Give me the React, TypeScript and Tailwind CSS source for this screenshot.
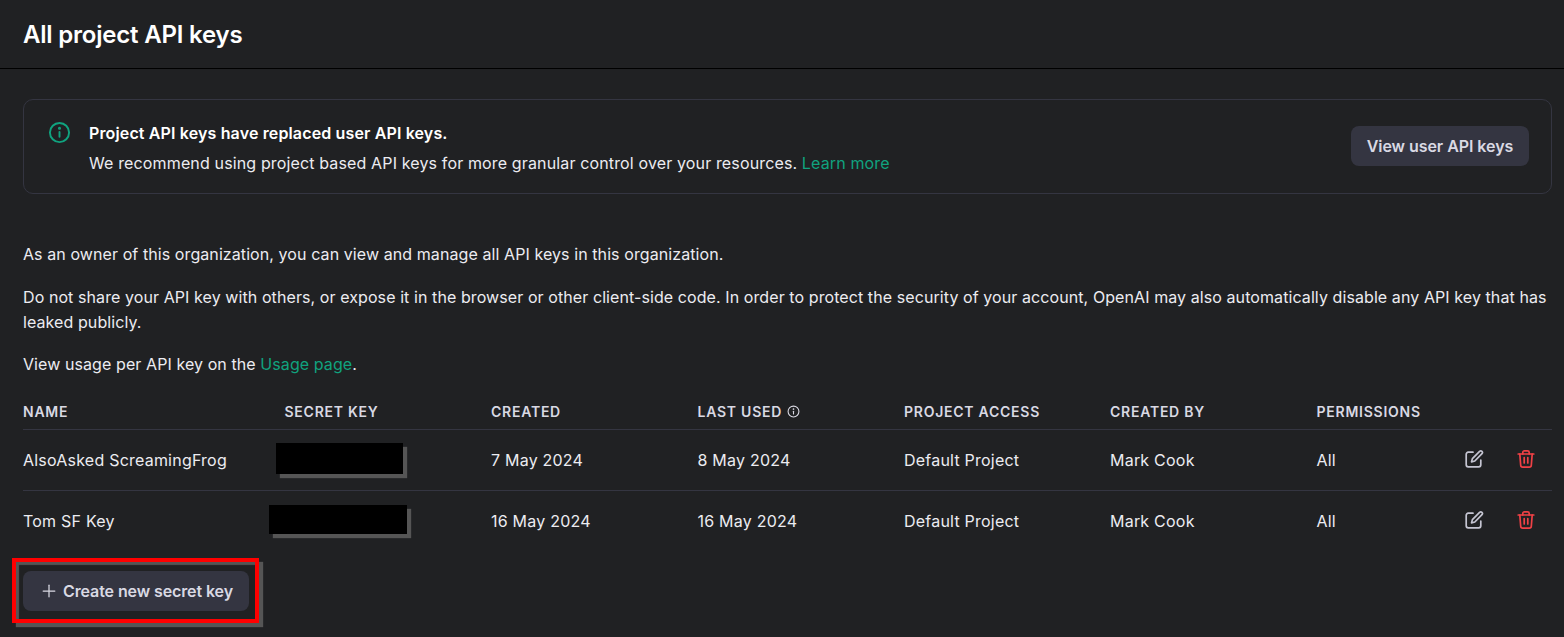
import React from 'react';
import { Plus } from 'lucide-react';

const font = 'font-["Inter","Liberation_Sans",sans-serif]';

const keys = [
  { name: 'AlsoAsked ScreamingFrog', created: '7 May 2024', used: '8 May 2024', redact: 'ml-[-9px] w-[127px] h-[31px]' },
  { name: 'Tom SF Key', created: '16 May 2024', used: '16 May 2024', redact: 'ml-[-16px] w-[138px] h-[29px]' },
];

function InfoIcon({ className }: { className: string }) {
  return (
    <svg viewBox="0 0 24 24" fill="none" stroke="currentColor" strokeWidth="2" strokeLinecap="round" className={className}>
      <circle cx="12" cy="12" r="10" />
      <path d="M12 11.5v5" />
      <circle cx="12" cy="7.6" r="0.6" fill="currentColor" />
    </svg>
  );
}

function EditIcon() {
  return (
    <svg viewBox="0 0 20 20" fill="none" stroke="currentColor" strokeWidth="1.7" strokeLinecap="round" strokeLinejoin="round" className="w-[20px] h-[20px] text-[#c5c5d2]">
      <path d="M9 3.2H4.2A2 2 0 0 0 2.2 5.2v10.6a2 2 0 0 0 2 2h10.6a2 2 0 0 0 2-2V11" />
      <path d="M15.6 2.3a1.7 1.7 0 0 1 2.4 2.4L10.8 12l-3.3.9.9-3.3z" />
    </svg>
  );
}

function TrashIcon() {
  return (
    <svg viewBox="0 0 20 20" fill="none" stroke="currentColor" strokeWidth="1.7" strokeLinecap="round" strokeLinejoin="round" className="w-[20px] h-[20px] text-[#ef4146]">
      <path d="M2.2 5h15.6" />
      <path d="M6.8 5V3.4a1.6 1.6 0 0 1 1.6-1.6h3.2a1.6 1.6 0 0 1 1.6 1.6V5" />
      <path d="M3.8 5l.9 11.2a2 2 0 0 0 2 1.9h6.6a2 2 0 0 0 2-1.9L16.2 5" />
      <path d="M8.2 8.5v5.5M11.8 8.5v5.5" />
    </svg>
  );
}

export default function App() {
  return (
    <div className={`${font} w-[1564px] h-[637px] overflow-hidden bg-[#202123] text-[#ececf1] text-[16px]`}>
      <div className="h-[69px] border-b border-black pl-[23px] pt-[19px]">
        <h1 className="text-[24px] leading-[32px] font-semibold text-white tracking-[-0.2px]">All project API keys</h1>
      </div>

      <div className="pl-[23px] pr-[12px] pt-[30px]">
        <div className="h-[95px] border border-[#343541] rounded-[10px] flex items-center pl-[24px] pr-[22px]">
          <InfoIcon className="w-[23px] h-[23px] text-[#10a37f] self-start mt-[21px] shrink-0" />
          <div className="ml-[18px] mt-[3px] flex-1 text-[16px] leading-[30px] tracking-[0.14px]">
            <div className="font-semibold text-white">Project API keys have replaced user API keys.</div>
            <div>
              We recommend using project based API keys for more granular control over your resources.{' '}
              <span className="text-[#10a37f]">Learn more</span>
            </div>
          </div>
          <button className="mb-[1px] h-[40px] w-[178px] rounded-[8px] bg-[#343541] text-[#d9d9e3] text-[16px] font-semibold tracking-[-0.05px]">View user API keys</button>
        </div>

        <p className="mt-[46px] leading-[28px] tracking-[0.085px]">As an owner of this organization, you can view and manage all API keys in this organization.</p>
        <p className="mt-[17px] leading-[25px] tracking-[0.085px]">
          Do not share your API key with others, or expose it in the browser or other client-side code. In order to protect the security of your account, OpenAI may also automatically disable any API key that has leaked publicly.
        </p>
        <p className="mt-[17px] leading-[25px] tracking-[0.085px]">
          View usage per API key on the <span className="text-[#10a37f]">Usage page</span>.
        </p>

        <div className="mt-[18px] grid grid-cols-[261.5px_206.5px_206.5px_206.5px_206px_206.5px_1fr] items-center h-[35px] pb-[2px] border-b border-[#343541] text-[14px] font-semibold text-[#d9d9e3] tracking-[0.75px]">
          <div>NAME</div>
          <div>SECRET KEY</div>
          <div>CREATED</div>
          <div className="flex items-center gap-[5px]">LAST USED <InfoIcon className="w-[13px] h-[13px]" /></div>
          <div>PROJECT ACCESS</div>
          <div>CREATED BY</div>
          <div>PERMISSIONS</div>
        </div>

        {keys.map((k, i) => (
          <div key={k.name} className={`grid grid-cols-[261.5px_206.5px_206.5px_206.5px_206px_206.5px_1fr] items-center tracking-[0.22px] ${i === 0 ? 'h-[61px] border-b border-[#343541]' : 'h-[60px]'}`}>
            <div>{k.name}</div>
            <div><div className={`${k.redact} mb-[3px] bg-black shadow-[4px_4px_1px_#555]`} /></div>
            <div>{k.created}</div>
            <div>{k.used}</div>
            <div>Default Project</div>
            <div>Mark Cook</div>
            <div className="flex items-center">
              <span>All</span>
              <span className="ml-[128px] mb-[2px] flex items-center gap-[32px]">
                <EditIcon />
                <TrashIcon />
              </span>
            </div>
          </div>
        ))}

        <div className="mt-[7px] ml-[-11px] w-[247px] h-[65px] border-[4px] border-[#ff0000] shadow-[4px_4px_1px_#555,inset_3px_3px_1px_#555] flex items-center pl-[7px]">
          <button className="h-[40px] w-[226px] rounded-[8px] bg-[#343541] text-[#d9d9e3] text-[16px] font-semibold tracking-[-0.1px] flex items-center justify-center gap-[4px]">
            <Plus className="w-[20px] h-[20px]" strokeWidth={1.5} />
            Create new secret key
          </button>
        </div>
      </div>
    </div>
  );
}
